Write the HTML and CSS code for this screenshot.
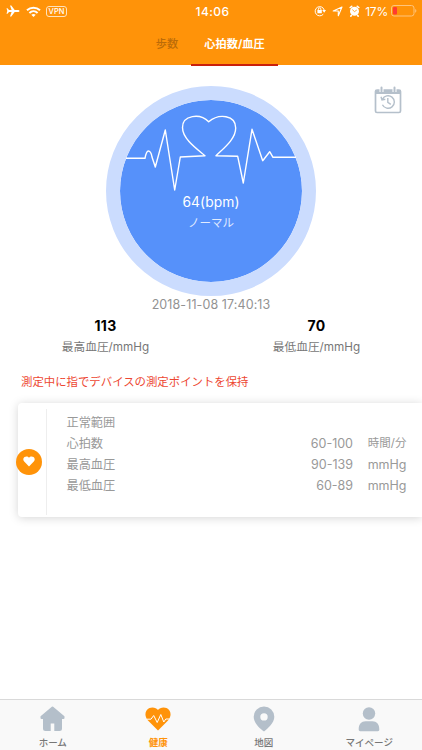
FILE: index.html
```html
<!DOCTYPE html>
<html lang="ja">
<head>
<meta charset="utf-8">
<title>心拍数/血圧</title>
<link rel="stylesheet" href="styles.css">
</head>
<body>
<header class="header">
  <div class="status">
    <div class="status-left">
      <svg width="14" height="12" viewBox="0 0 14 12"><path fill="#fff" d="M13.5 6c0-.7-.8-1-1.700-1H8.700L5.300.5H4L5.600 5H3L1.500 3.300H.5L1.300 6 .5 8.700h1L3 7h2.600L4 11.500h1.300L8.700 7h3.100c.9 0 1.700-.3 1.700-1z"/></svg>
      <svg class="wifi" width="15" height="11" viewBox="0 0 15 11"><g fill="none" stroke="#fff" stroke-width="2"><path d="M1 4.300c3.700-3.500 9.300-3.500 13 0"/><path d="M3.400 6.900c2.400-2.200 5.800-2.200 8.200 0"/></g><path fill="#fff" d="M5.300 8.700c1.300-1.100 3.100-1.100 4.400 0L7.500 11z"/></svg>
      <span class="vpn">VPN</span>
    </div>
    <span class="clock">14:06</span>
    <div class="status-right">
      <svg width="12" height="12" viewBox="0 0 12 12"><g fill="none" stroke="#fff"><path d="M9.300 9.200A4.600 4.600 0 1 1 10.200 5"/><path d="M4.300 5.500V4.200a1.300 1.300 0 0 1 2.600 0v1.300"/></g><path fill="#fff" d="M3.400 5h4.400v3.300H3.400zM8.200 5h3.800L10.200 7.700z"/></svg>
      <svg width="11" height="11" viewBox="0 0 11 11"><path fill="none" stroke="#fff" stroke-width="1.100" stroke-linejoin="round" d="M10 1 6.300 9.700V5H1.200z"/></svg>
      <svg width="11" height="12" viewBox="0 0 11 12"><circle cx="5.500" cy="6.300" r="4.500" fill="#fff"/><path stroke="#fff" stroke-width="1.600" stroke-linecap="round" d="M1.200 2.500 2.700 1.300M9.800 2.500 8.300 1.300M2.300 10.600l-.5.500M8.700 10.600l.5.500"/><path fill="none" stroke="#ff9309" stroke-width=".8" d="M3.300 4.600 5.500 6.600 7.800 5"/></svg>
      <span class="percent">17%</span>
      <svg width="26" height="12" viewBox="0 0 26 12"><rect x=".5" y=".5" width="22.500" height="10.500" rx="2.500" fill="none" stroke="#ffc47c"/><rect x="2" y="2" width="4" height="7.500" rx="1" fill="#ff3b30"/><path fill="#ffc47c" d="M24.200 4c1.600.5 1.600 3.200 0 3.700z"/></svg>
    </div>
  </div>
  <nav class="tabs">
    <span class="tab"><b>歩数</b></span>
    <span class="tab tab-active"><b>心拍数/血圧</b></span>
  </nav>
</header>

<main class="main">
  <section class="gauge-area">
    <div class="gauge">
      <svg class="pulse" viewBox="120 100 182 182"><path fill="none" stroke="#fff" stroke-width="1.400" stroke-linejoin="round" d="M126 158.300H145C146 153 147 151 148.300 151 150.500 151 151.500 154 152 157L155.300 167 165.300 130 174.700 190 180.300 157 205 155.700C197 149 182.500 139 182.500 127.500 182.500 115 200 113 208.700 121.700 219 113 235.700 115 235.700 128 235.700 139 224 148 216 155.700L237.700 156.300 243.300 183 252 129.300 262.700 160.700 269.700 151.700 273 157.300H296"/></svg>
      <div class="bpm">64(bpm)</div>
      <div class="state">ノーマル</div>
    </div>
    <svg class="history" width="28" height="29" viewBox="0 0 28 29"><g fill="none" stroke="#b5c0cb"><rect x="1.500" y="4" width="25" height="22.500" rx="1.500" stroke-width="1.700"/><path stroke-width="4" d="M1.200 6H26.800"/><path stroke="#fff" stroke-width="4" d="M7.500 0v6M20.500 0v6"/><path stroke-width="2" stroke-linecap="round" d="M7.500 1.500v4M20.500 1.500v4"/><path stroke-width="1.400" d="M8.400 13.200A6.300 6.300 0 1 1 8.400 18.800M7 10.800 8 14 11.300 13.300"/><path stroke-width="1.400" d="M13.800 12v4.400l3 2"/></g></svg>
  </section>
  <div class="time">2018-11-08 17:40:13</div>
  <section class="readings">
    <div class="reading"><strong>113</strong><span>最高血圧/mmHg</span></div>
    <div class="reading"><strong>70</strong><span>最低血圧/mmHg</span></div>
  </section>
  <p class="notice">測定中に指でデバイスの測定ポイントを保持</p>
  <section class="card">
    <div class="card-side"><span class="badge"><svg width="12" height="11" viewBox="0 0 12 11"><path fill="#fff" d="M6 10.500 1.200 5.600C-.3 4 .3 1.800 1.500 1 3 0 5 .2 6 1.800 7 .2 9 0 10.500 1c1.200.8 1.800 3 .3 4.600z"/></svg></span></div>
    <div class="ranges">
      <div class="row"><span>正常範囲</span></div>
      <div class="row"><span>心拍数</span><span class="value">60-100</span><span class="unit unit-ja">時間/分</span></div>
      <div class="row"><span>最高血圧</span><span class="value">90-139</span><span class="unit">mmHg</span></div>
      <div class="row"><span>最低血圧</span><span class="value">60-89</span><span class="unit">mmHg</span></div>
    </div>
  </section>
</main>

<footer class="bottom">
  <div class="item"><svg width="26" height="26" viewBox="0 0 26 26"><path fill="#b4bfca" stroke="#b4bfca" stroke-width="2" stroke-linejoin="round" d="M12.500 1.500 1.500 10.800V12H4v10.500c0 .8.500 1.500 1.500 1.500h14c1 0 1.500-.7 1.500-1.500V12h2.500v-1.200z"/><path fill="#f9f9f9" d="M10.700 17.500h3.600V25h-3.600z"/></svg><span>ホーム</span></div>
  <div class="item item-active"><svg width="26" height="26" viewBox="0 0 26 26"><path fill="#ff9309" d="M13 24.500 3 14.500C-1.500 9.500.5 3.500 4.500 2 8 .7 11.500 2 13 4c1.500-2 5-3.300 8.500-2 4 1.500 6 7.500 1.500 12.500z"/><path fill="none" stroke="#fff" stroke-width="1" stroke-linejoin="round" d="M1.500 13.200H6L8.700 9.500l3.500 7L15.800 8.500l3 7.500 2-3h4"/></svg><span>健康</span></div>
  <div class="item"><svg width="26" height="26" viewBox="0 0 26 26"><path fill="#b4bfca" fill-rule="evenodd" d="M13 .5A10.300 10.300 0 0 1 23.300 10.800C23.300 17 17 22.500 13 25.500 9 22.500 2.700 17 2.700 10.800A10.300 10.300 0 0 1 13 .5zM13 7.200a3.700 3.700 0 1 0 0 7.400 3.700 3.700 0 0 0 0-7.400z"/></svg><span>地図</span></div>
  <div class="item"><svg width="26" height="26" viewBox="0 0 26 26"><g fill="#b4bfca"><circle cx="13" cy="7.500" r="6.200"/><path d="M2.700 23.500C2.700 18 5.500 15.300 9.500 15.300h7c4 0 6.800 2.700 6.800 8.200 0 1-.5 1.700-1.500 1.700H4.200c-1 0-1.500-.7-1.500-1.700z"/></g></svg><span>マイページ</span></div>
</footer>
</body>
</html>
```
FILE: styles.css
```css
* { box-sizing: border-box; }
body {
  margin: 0;
  height: 750px;
  display: flex;
  flex-direction: column;
  overflow: hidden;
  background: #fff;
  font-family: Inter, "Noto Sans CJK JP", sans-serif;
  font-size: 12px;
  white-space: nowrap;
}
svg { display: block; flex: none; }
.header { height: 65px; background: #ff9309; color: #fff; flex: none; }
.status {
  height: 22px;
  padding: 0 5px 0 6px;
  display: grid;
  grid-template-columns: 1fr auto 1fr;
  align-items: center;
}
.status-left, .status-right { display: flex; align-items: center; }
.status-right { justify-content: flex-end; gap: 6px; }
.wifi { margin: 0 5px 0 6px; }
.vpn {
  width: 21px;
  height: 11px;
  border: 1px solid #ffe2bc;
  border-radius: 3px;
  font-size: 7.5px;
  font-weight: 500;
  line-height: 10px;
  text-align: center;
}
.clock { font-size: 12px; font-weight: 500; letter-spacing: .4px; padding-left: 2px; }
.percent { font-size: 12px; margin-right: -3px; margin-left: -1px; letter-spacing: -.2px; }
.tabs { height: 43px; margin-left: 143px; display: flex; }
.tab { width: 48px; height: 43.500px; font-size: 11.200px; line-height: 44px; text-align: center; color: #bb6b08; }
.tab b { font-weight: 500; }
.tab-active { width: 87px; color: #fff; border-bottom: 2px solid #c9200c; }
.tab-active b { font-weight: 700; }
.main { flex: 1; }
.gauge-area {
  padding: 20.500px 20px 0;
  display: grid;
  grid-template-columns: 1fr 210px 1fr;
}
.gauge {
  grid-column: 2;
  width: 210px;
  height: 210px;
  border: 14px solid #cbdcfe;
  border-radius: 50%;
  background: #5691fa;
  color: #fff;
  text-align: center;
  display: grid;
  grid-template-rows: 91px 20px 22px;
  background-clip: padding-box;
}
.pulse { width: 182px; height: 182px; grid-area: 1 / 1; }
.bpm { grid-area: 2 / 1; font-size: 13.800px; line-height: 22px; letter-spacing: .1px; }
.state { grid-area: 3 / 1; font-size: 11.500px; line-height: 24px; color: #e1ebff; }
.history { justify-self: end; }
.time { height: 17px; line-height: 17px; font-size: 12.500px; text-align: center; color: #929292; letter-spacing: .1px; }
.readings { display: flex; height: 48px; }
.reading { flex: 1; display: flex; flex-direction: column; align-items: center; color: #777; }
.reading strong { height: 24px; line-height: 26px; color: #000; font-size: 14px; font-weight: 700; letter-spacing: .3px; }
.reading span { font-size: 11.700px; line-height: 20px; }
.notice { margin: 12px 0 0 21px; height: 20px; line-height: 18px; font-size: 11.400px; color: #ed4732; }
.card {
  margin: 10px 0 0 17.500px;
  height: 114px;
  display: flex;
  border-radius: 4px 0 0 4px;
  background: #fff;
  box-shadow: 0 1px 10px rgba(0, 0, 0, .17);
}
.card-side { width: 29px; margin: 6px 0 2px; border-right: 1px solid #eee; display: flex; align-items: center; }
.badge {
  width: 26px;
  height: 26px;
  margin-left: -2px;
  display: flex;
  align-items: center;
  justify-content: center;
  border-radius: 50%;
  background: #ff9309;
}
.ranges { flex: 1; padding: 9px 15.500px 0 20px; color: #999; font-size: 12.200px; }
.row { height: 21px; line-height: 21px; display: grid; grid-template-columns: 1fr 80px 53.500px; }
.value, .unit { text-align: right; font-size: 12.500px; }
.unit-ja { font-size: 11.500px; }
.bottom { height: 51px; flex: none; border-top: 1px solid #d9d9d9; background: #f9f9f9; display: flex; }
.item { flex: 1; padding-top: 6px; display: flex; flex-direction: column; align-items: center; color: #777; font-size: 9.500px; font-weight: 500; line-height: 22px; }
.item-active { color: #ff9309; font-weight: 700; }
```
